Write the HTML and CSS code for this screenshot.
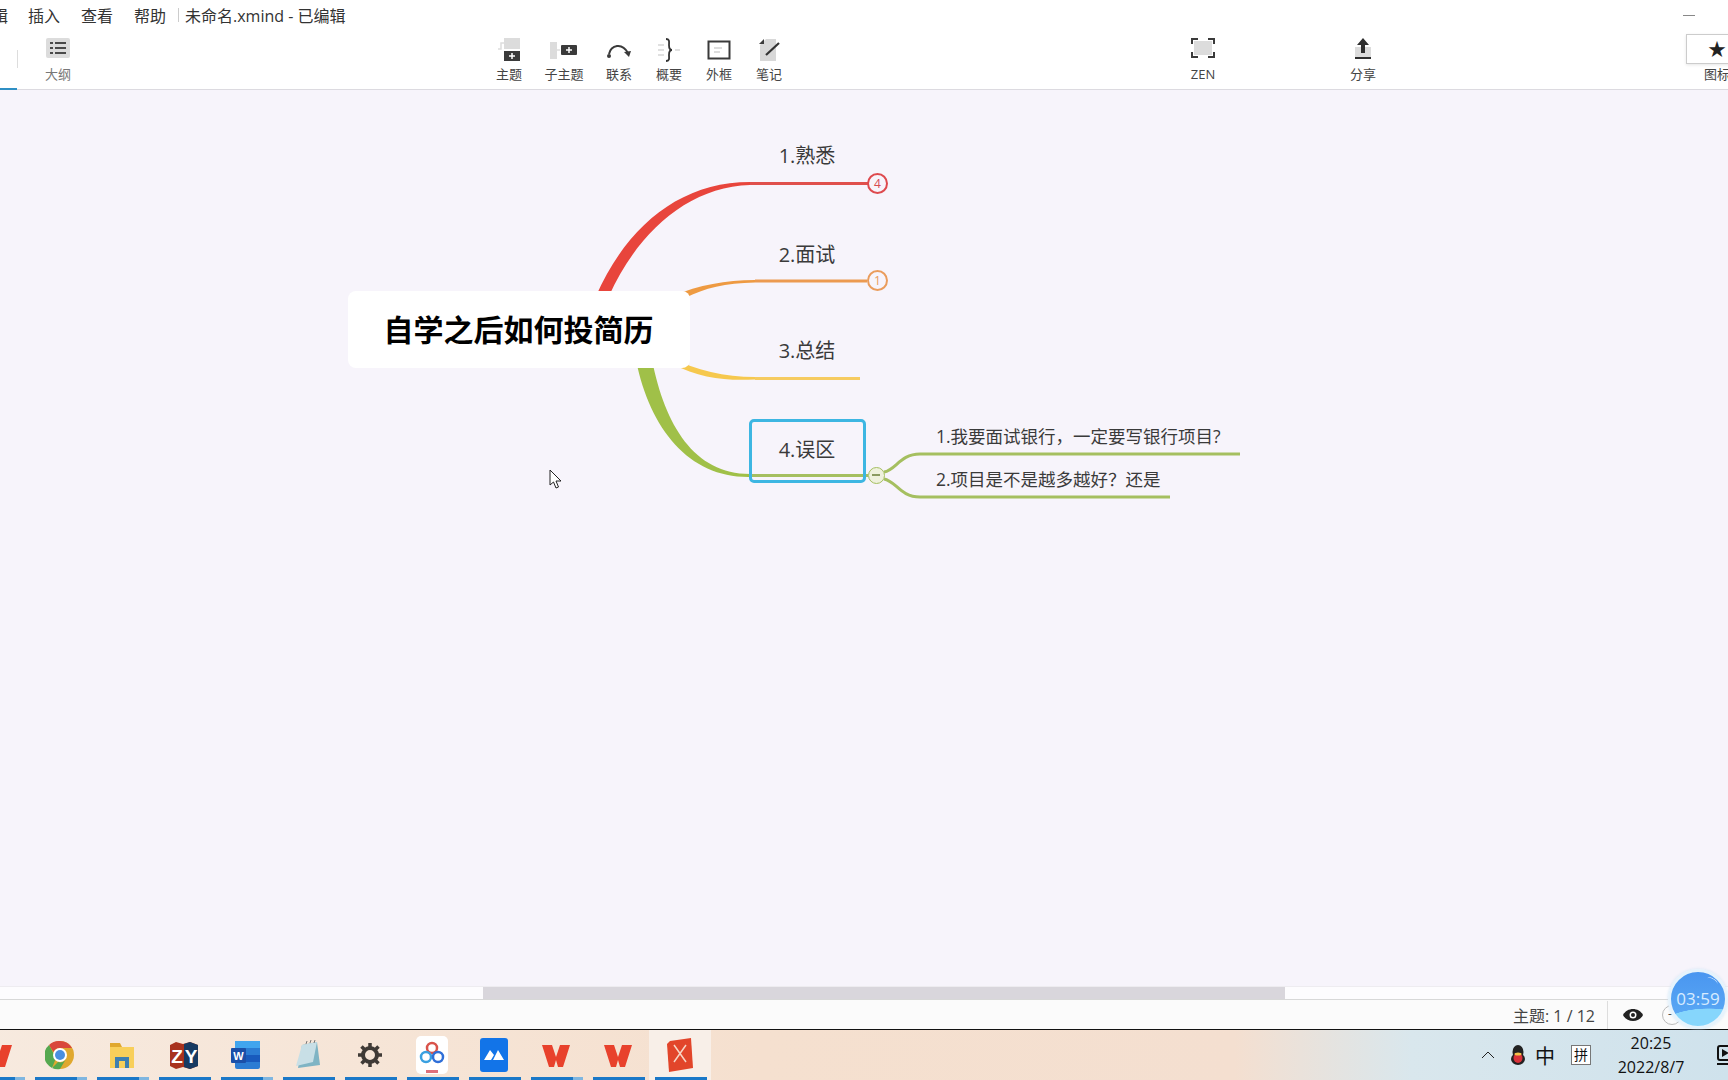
FILE: index.html
```html
<!DOCTYPE html>
<html lang="zh-CN">
<head>
    <meta charset="UTF-8">
    <title>未命名.xmind - 已编辑</title>
    <link rel="stylesheet" href="styles.css">
</head>
<body>

<div class="window">

    <div class="menubar">
        <span class="menu-cut">辑</span>
        <span class="menu-item">插入</span>
        <span class="menu-item">查看</span>
        <span class="menu-item">帮助</span>
        <span class="menu-sep"></span>
        <span class="doc-title">未命名.xmind - 已编辑</span>
        <span class="minimize"></span>
    </div>

    <div class="toolbar">
        <div class="tab-active"></div>
        <div class="tab-sep"></div>

        <div class="tool tool-outline">
            <svg width="24" height="20" viewBox="0 0 24 20">
                <rect width="24" height="20" rx="2" fill="#dcdcdc"/>
                <g fill="#4a4a4a">
                    <rect x="4" y="4" width="3" height="2"/><rect x="9" y="4" width="11" height="2"/>
                    <rect x="4" y="9" width="3" height="2"/><rect x="9" y="9" width="11" height="2"/>
                    <rect x="4" y="14" width="3" height="2"/><rect x="9" y="14" width="11" height="2"/>
                </g>
            </svg>
            <span>大纲</span>
        </div>

        <div class="tool-group">
            <div class="tool">
                <svg width="24" height="24" viewBox="0 0 24 24">
                    <path d="M7 5H4v6H1" fill="none" stroke="#ddd" stroke-width="1.5"/>
                    <rect x="7" y="0" width="16" height="11" fill="#dcdcdc"/>
                    <rect x="7" y="13" width="16" height="10" fill="#3a3a3a"/>
                    <path d="M15 15v6M12 18h6" stroke="#fff" stroke-width="1.5"/>
                </svg>
                <span>主题</span>
            </div>
            <div class="tool tool-wide">
                <svg width="28" height="24" viewBox="0 0 28 24">
                    <rect x="0" y="4" width="7" height="17" fill="#dcdcdc"/>
                    <path d="M7 12h3" stroke="#ddd" stroke-width="1.5"/>
                    <rect x="11" y="7" width="16" height="10" rx="1" fill="#3a3a3a"/>
                    <path d="M19 9v6M16 12h6" stroke="#fff" stroke-width="1.5"/>
                </svg>
                <span>子主题</span>
            </div>
            <div class="tool">
                <svg width="26" height="24" viewBox="0 0 26 24">
                    <path d="M3 16C5 7 16 4 22 15" fill="none" stroke="#3a3a3a" stroke-width="2"/>
                    <circle cx="3" cy="18" r="2" fill="#3a3a3a"/>
                    <path d="M18 14l7-1-2 6z" fill="#3a3a3a"/>
                </svg>
                <span>联系</span>
            </div>
            <div class="tool">
                <svg width="24" height="24" viewBox="0 0 24 24">
                    <path d="M1 7h6M1 12h6M1 17h6M18 12h5" stroke="#d6d6d6" stroke-width="1.5"/>
                    <path d="M9 1c4 0 3 3 3 6s1 5 3 5c-2 0-3 2-3 5s1 6-3 6" fill="none" stroke="#333" stroke-width="1.8"/>
                </svg>
                <span>概要</span>
            </div>
            <div class="tool">
                <svg width="24" height="24" viewBox="0 0 24 24">
                    <rect x="1.5" y="3.5" width="21" height="17" fill="#fff" stroke="#3a3a3a" stroke-width="2"/>
                    <path d="M7 10h8M7 14h6" stroke="#d2d2d2" stroke-width="1.5"/>
                </svg>
                <span>外框</span>
            </div>
            <div class="tool">
                <svg width="24" height="24" viewBox="0 0 24 24">
                    <path d="M3 7l6-6h10v22H3z" fill="#d8d8d8"/>
                    <path d="M2 6l5-5v5z" fill="#3a3a3a"/>
                    <path d="M9 17L22 5" stroke="#333" stroke-width="2.2"/>
                </svg>
                <span>笔记</span>
            </div>
        </div>

        <div class="tool tool-zen">
            <svg width="24" height="20" viewBox="0 0 24 20">
                <rect x="3" y="3" width="18" height="14" fill="#dcdcdc"/>
                <path d="M1 6V1h6M17 1h6v5M23 14v5h-6M7 19H1v-5" fill="none" stroke="#3a3a3a" stroke-width="2"/>
            </svg>
            <span>ZEN</span>
        </div>

        <div class="tool tool-share">
            <svg width="18" height="22" viewBox="0 0 18 22">
                <rect x="1" y="9" width="16" height="11" fill="#dcdcdc"/>
                <path d="M9 0l6 7h-4v8H7V7H3z" fill="#2f2f2f"/>
                <rect x="1" y="19" width="16" height="2" fill="#2f2f2f"/>
            </svg>
            <span>分享</span>
        </div>

        <div class="tool tool-icons">
            <div class="icons-box">★</div>
            <span>图标</span>
        </div>
    </div>

    <div class="canvas">
        <svg class="links" width="1728" height="896" viewBox="0 90 1728 896">
            <path d="M596 296C627 226 680 182 750 182L750 185C688 187 638 232 609 296Z" fill="#e8453c"/>
            <path d="M750 183.5H868" stroke="#e0504c" stroke-width="3"/>
            <path d="M672 296C700 285 725 280 755 280L755 282.5C725 283 705 288 685 298Z" fill="#ee9a42"/>
            <path d="M755 281H867" stroke="#ec9a50" stroke-width="3"/>
            <path d="M672 358C695 370 725 377 755 377L755 379.5C725 381 700 378 672 364Z" fill="#f6c84e"/>
            <path d="M755 378.500H860" stroke="#f6cb60" stroke-width="3"/>
            <path d="M636 360C650 430 690 478 750 477L750 474C694 474 665 425 652 360Z" fill="#a0c048"/>
            <path d="M750 475.500H868" stroke="#a5bf60" stroke-width="3"/>
            <path d="M884 472C896 470 900 454 920 454H1240" fill="none" stroke="#a5bf60" stroke-width="3"/>
            <path d="M884 479C896 481 900 497 920 497H1170" fill="none" stroke="#a5bf60" stroke-width="3"/>
        </svg>

        <div class="central">自学之后如何投简历</div>

        <div class="topic topic-1">1.熟悉</div>
        <div class="badge badge-red">4</div>
        <div class="topic topic-2">2.面试</div>
        <div class="badge badge-orange">1</div>
        <div class="topic topic-3">3.总结</div>
        <div class="topic-box"></div>
        <div class="topic topic-4">4.误区</div>
        <div class="collapse"></div>
        <div class="subtopic subtopic-1">1.我要面试银行，一定要写银行项目?</div>
        <div class="subtopic subtopic-2">2.项目是不是越多越好？还是</div>

        <svg class="cursor" width="14" height="20" viewBox="0 0 14 20">
            <path d="M1 1V16L4.500 13L7 19L9.500 18L7 12H12Z" fill="#fff" stroke="#222" stroke-width="1"/>
        </svg>
    </div>

    <div class="scrollbar"><div class="scroll-thumb"></div></div>

    <div class="statusbar">
        <span class="status-count">主题: 1 / 12</span>
        <span class="status-sep"></span>
        <svg width="20" height="12" viewBox="0 0 20 12" class="status-eye">
            <path d="M0 6C4-2 16-2 20 6C16 14 4 14 0 6Z" fill="#222"/>
            <circle cx="10" cy="6" r="3.500" fill="#fff"/>
            <circle cx="10" cy="6" r="2" fill="#222"/>
        </svg>
        <span class="status-zoom">-</span>
    </div>

    <div class="taskbar">
        <div class="task-item multi">
            <svg width="30" height="30" viewBox="0 0 30 30"><path d="M1 5H11L15 17L19 5H29L22 27H17L15 20L13 27H8Z" fill="#e8412c"/></svg>
        </div>
        <div class="task-item multi">
            <svg width="30" height="30" viewBox="0 0 30 30">
                <circle cx="15" cy="15" r="14" fill="#e0a82e"/>
                <path d="M15 1A14 14 0 0 1 27 8H15A7 7 0 0 0 8.500 12L4 5A14 14 0 0 1 15 1Z" fill="#d9483b"/>
                <path d="M4 5L11 18L7 28A14 14 0 0 1 4 5Z" fill="#55a84f"/>
                <path d="M7 28L13 22A7 7 0 0 0 21 19L15 29A14 14 0 0 1 7 28Z" fill="#55a84f"/>
                <circle cx="15" cy="15" r="7" fill="#fff"/>
                <circle cx="15" cy="15" r="5" fill="#4a8fe0"/>
            </svg>
        </div>
        <div class="task-item multi">
            <svg width="30" height="30" viewBox="0 0 30 30">
                <path d="M3 3H13L15 7H3Z" fill="#e0a82e"/>
                <rect x="3" y="7" width="24" height="21" fill="#f8cf5a"/>
                <path d="M8 28V17H22V28H18V21H12V28Z" fill="#3f7fb0"/>
            </svg>
        </div>
        <div class="task-item">
            <svg width="30" height="30" viewBox="0 0 30 30">
                <path d="M1 5L7 2L14 4L21 2L29 5V26L21 29L14 27L7 29L1 26Z" fill="#a8321e"/>
                <path d="M15 4L21 2L29 5V26L21 29L15 27Z" fill="#173a62"/>
                <text x="8" y="23" class="zy-letter">Z</text>
                <text x="22" y="23" class="zy-letter">Y</text>
            </svg>
        </div>
        <div class="task-item multi">
            <svg width="30" height="30" viewBox="0 0 30 30">
                <rect x="4" y="1" width="25" height="28" rx="2" fill="#2b7cd3"/>
                <rect x="4" y="1" width="25" height="7" fill="#41a5ee"/>
                <rect x="4" y="15" width="25" height="7" fill="#185abd"/>
                <rect x="0" y="8" width="15" height="15" rx="1" fill="#1a4fa8"/>
                <text x="7.500" y="20" class="word-letter">W</text>
            </svg>
        </div>
        <div class="task-item">
            <svg width="30" height="30" viewBox="0 0 30 30">
                <path d="M9 5L24 2L27 25L5 28Z" fill="#7fb4c4"/>
                <path d="M9 5L24 2L20 22L3 26Z" fill="#c8dfe6"/>
                <path d="M13 4l1-3M17 3l1-3M21 3l1-3" stroke="#777" stroke-width="1"/>
            </svg>
        </div>
        <div class="task-item">
            <svg width="24" height="24" viewBox="0 0 24 24">
                <circle cx="12" cy="12" r="7" fill="none" stroke="#3f3a36" stroke-width="4"/>
                <path d="M12 0v5M12 19v5M0 12h5M19 12h5M3.500 3.500l3.500 3.500M17 17l3.500 3.500M20.500 3.500L17 7M7 17l-3.500 3.500" stroke="#3f3a36" stroke-width="3.500"/>
            </svg>
        </div>
        <div class="task-item">
            <svg width="32" height="38" viewBox="0 0 32 38">
                <rect width="32" height="38" rx="5" fill="#fff"/>
                <circle cx="16" cy="12" r="5" fill="none" stroke="#d9534a" stroke-width="2.500"/>
                <circle cx="10" cy="21" r="5" fill="none" stroke="#3aa0e0" stroke-width="2.500"/>
                <circle cx="22" cy="21" r="5" fill="none" stroke="#2f6fd8" stroke-width="2.500"/>
                <rect x="10" y="34" width="12" height="3" fill="#e0707a"/>
            </svg>
        </div>
        <div class="task-item">
            <svg width="28" height="34" viewBox="0 0 28 34">
                <rect width="28" height="34" rx="3" fill="#1274e8"/>
                <path d="M4 22L10 12L14 17L11 22ZM13 22L18 12L24 22Z" fill="#fff"/>
            </svg>
        </div>
        <div class="task-item multi">
            <svg width="30" height="30" viewBox="0 0 30 30"><path d="M1 5H11L15 17L19 5H29L22 27H17L15 20L13 27H8Z" fill="#e8412c"/></svg>
        </div>
        <div class="task-item">
            <svg width="30" height="30" viewBox="0 0 30 30"><path d="M1 5H11L15 17L19 5H29L22 27H17L15 20L13 27H8Z" fill="#e8412c"/></svg>
        </div>
        <div class="task-item task-current">
            <svg width="26" height="34" viewBox="0 0 26 34">
                <path d="M3 3L24 0L26 30L2 34L0 6Z" fill="#e2452a"/>
                <path d="M7 7L19 24M19 7L7 24" stroke="#f7d6c6" stroke-width="1.500"/>
            </svg>
        </div>

        <div class="tray">
            <svg width="14" height="8" viewBox="0 0 14 8"><path d="M1 7L7 1L13 7" fill="none" stroke="#222" stroke-width="1"/></svg>
            <svg width="16" height="20" viewBox="0 0 16 20">
                <ellipse cx="8" cy="7" rx="5.500" ry="7" fill="#222"/>
                <ellipse cx="8" cy="14" rx="7" ry="6" fill="#222"/>
                <ellipse cx="8" cy="13" rx="4.500" ry="5" fill="#d9323a"/>
                <ellipse cx="8" cy="9" rx="3.500" ry="1.500" fill="#f6c24a"/>
            </svg>
            <span class="tray-zh">中</span>
            <span class="tray-ime">拼</span>
            <div class="tray-clock">
                <span>20:25</span>
                <span>2022/8/7</span>
            </div>
            <svg class="tray-rec" width="14" height="22" viewBox="0 0 14 22">
                <rect x="1" y="2" width="20" height="14" rx="2" fill="none" stroke="#111" stroke-width="2"/>
                <path d="M5 5L12 9L5 13Z" fill="#111"/>
                <rect x="0" y="19" width="14" height="2" fill="#111"/>
            </svg>
        </div>
    </div>

    <div class="timer">03:59</div>
</div>

</body>
</html>
```
FILE: styles.css
```css
* {
    box-sizing: border-box;
}

body {
    margin: 0;
    font-family: "Open Sans", "Noto Sans CJK SC", sans-serif;
    color: #333;
    overflow: hidden;
}

.window {
    position: relative;
    display: flex;
    flex-direction: column;
    width: 1728px;
    height: 1080px;
    overflow: hidden;
    background-color: #fff;
}

/* menu row */
.menubar {
    display: flex;
    align-items: center;
    height: 28px;
    flex: none;
    font-size: 16px;
    padding-top: 2px;
}

.menu-cut {
    margin-left: -8px;
    margin-right: 20px;
}

.menu-item {
    width: 32px;
    margin-right: 21px;
    white-space: nowrap;
}

.menu-sep {
    width: 1px;
    height: 14px;
    margin-left: -9px;
    margin-right: 6px;
    background-color: #ccc;
}

.doc-title {
    white-space: nowrap;
}

.minimize {
    width: 12px;
    height: 1px;
    margin-left: auto;
    margin-right: 33px;
    background-color: #888;
}

/* toolbar */
.toolbar {
    position: relative;
    display: flex;
    height: 62px;
    flex: none;
    border-bottom: 1px solid #dcdae0;
}

.tab-active {
    position: absolute;
    left: 0;
    bottom: -1px;
    width: 17px;
    height: 2px;
    background-color: #2f8fc4;
}

.tab-sep {
    position: absolute;
    left: 17px;
    top: 22px;
    width: 1px;
    height: 18px;
    background-color: #ddd;
}

.tool {
    display: flex;
    flex: none;
    flex-direction: column;
    align-items: center;
    justify-content: space-between;
    width: 50px;
    height: 44px;
    margin-top: 10px;
    font-size: 13px;
    line-height: 16px;
    color: #444;
    white-space: nowrap;
}

.tool-wide {
    width: 60px;
}

.tool-outline {
    margin-left: 33px;
    color: #777;
}

.tool-group {
    display: flex;
    flex: none;
    margin-left: 401px;
}

.tool-zen {
    margin-left: 384px;
}

.tool-share {
    margin-left: 110px;
}

.tool-icons {
    margin-left: 298px;
    align-items: flex-start;
    width: 60px;
    margin-top: 6px;
    height: 48px;
}

.icons-box {
    width: 60px;
    height: 30px;
    padding-left: 21px;
    font-size: 18px;
    line-height: 28px;
    color: #222;
    border: 1px solid #ccc;
    background-color: #fff;
    box-shadow: 0 1px 3px rgba(0, 0, 0, 0.1);
}

.tool-icons span {
    margin-left: 18px;
}

/* map area, nodes sit at their own place on the canvas */
.canvas {
    position: relative;
    flex: 1;
    background-color: #f7f4fb;
}

.links {
    position: absolute;
    left: 0;
    top: 0;
}

.central {
    position: absolute;
    left: 348px;
    top: 201px;
    width: 342px;
    height: 77px;
    padding-right: 1px;
    border-radius: 8px;
    background-color: #fff;
    font-family: "Noto Sans CJK SC", sans-serif;
    font-size: 30px;
    font-weight: 700;
    line-height: 75px;
    text-align: center;
    color: #000;
}

.topic {
    position: absolute;
    left: 749px;
    width: 116px;
    font-size: 20px;
    line-height: 28px;
    text-align: center;
    color: #3a3a3a;
}

.topic-1 {
    top: 52px;
}

.topic-2 {
    top: 151px;
}

.topic-3 {
    top: 247px;
}

.topic-4 {
    top: 346px;
}

.topic-box {
    position: absolute;
    left: 749px;
    top: 329px;
    width: 117px;
    height: 64px;
    border: 3px solid #3db6e2;
    border-radius: 5px;
}

.badge {
    position: absolute;
    left: 867px;
    width: 21px;
    height: 21px;
    border: 2px solid;
    border-radius: 50%;
    background-color: #f7f4fb;
    font-size: 12px;
    line-height: 17px;
    text-align: center;
}

.badge-red {
    top: 83px;
    border-color: #de4a4e;
    color: #d84a50;
}

.badge-orange {
    top: 180px;
    border-color: #ea9c5c;
    color: #ea9c5c;
}

.collapse {
    position: absolute;
    left: 868px;
    top: 377px;
    width: 17px;
    height: 17px;
    border: 1.500px solid #a5bf60;
    border-radius: 50%;
    background-color: #eef1dc;
}

.collapse::after {
    content: "";
    position: absolute;
    left: 3px;
    top: 6px;
    width: 8px;
    height: 1.500px;
    background-color: #8a9a60;
}

.subtopic {
    position: absolute;
    left: 936px;
    font-size: 17.500px;
    line-height: 26px;
    white-space: nowrap;
    color: #3a3a3a;
}

.subtopic-1 {
    top: 333px;
}

.subtopic-2 {
    top: 376px;
}

.cursor {
    position: absolute;
    left: 549px;
    top: 379px;
}

/* bottom bars */
.scrollbar {
    height: 13px;
    flex: none;
    padding-left: 483px;
    background-color: #fdfcfe;
    border-top: 1px solid #eeecf0;
}

.scroll-thumb {
    width: 802px;
    height: 12px;
    background-color: #d9d6dc;
}

.statusbar {
    display: flex;
    align-items: center;
    height: 31px;
    flex: none;
    padding-left: 1513px;
    border-top: 1px solid #d8d8d8;
    border-bottom: 1px solid #111;
    background-color: #fbfbfb;
    font-size: 16px;
    color: #444;
    white-space: nowrap;
}

.status-count {
    width: 94px;
}

.status-sep {
    width: 1px;
    height: 28px;
    background-color: #ddd;
}

.status-eye {
    margin-left: 15px;
}

.status-zoom {
    width: 20px;
    height: 20px;
    margin-left: 19px;
    border: 1px solid #bbb;
    border-radius: 50%;
    font-size: 12px;
    line-height: 16px;
    padding-left: 5px;
}

.taskbar {
    display: flex;
    height: 50px;
    flex: none;
    margin-left: -33px;
    width: 1761px;
    background: linear-gradient(to right, #f7eadf 0%, #f5e0cf 45%, #f4dfd0 72%, #d9e7ed 82%, #cfe2ec 100%);
}

.task-item {
    position: relative;
    display: flex;
    align-items: center;
    justify-content: center;
    width: 62px;
    height: 50px;
}

.task-item::after {
    content: "";
    position: absolute;
    left: 6px;
    bottom: 0;
    width: 52px;
    height: 3px;
    background-color: #1a78c8;
}

.multi::before {
    content: "";
    position: absolute;
    left: 48px;
    bottom: 0;
    width: 10px;
    height: 3px;
    z-index: 1;
    background-color: #7fb6e0;
}

.task-current {
    background-color: #f8efe8;
}

.zy-letter {
    font-family: "Liberation Sans", sans-serif;
    font-size: 19px;
    font-weight: 700;
    text-anchor: middle;
    fill: #fff;
}

.word-letter {
    font-family: "Liberation Sans", sans-serif;
    font-size: 11px;
    font-weight: 700;
    text-anchor: middle;
    fill: #fff;
}

.tray {
    display: flex;
    align-items: center;
    margin-left: auto;
    color: #111;
}

.tray svg {
    flex: none;
}

.tray-zh {
    margin-left: 9px;
    font-size: 20px;
}

.tray-ime {
    width: 20px;
    height: 20px;
    margin-left: 16px;
    border: 1px solid #777;
    background-color: #fff;
    font-size: 14px;
    line-height: 18px;
    text-align: center;
}

.tray-clock {
    display: flex;
    flex-direction: column;
    align-items: center;
    width: 72px;
    margin-left: 24px;
    font-size: 16px;
    line-height: 24px;
    white-space: nowrap;
}

.tray-rec {
    margin-left: 30px;
    margin-right: -3px;
}

.tray > svg:first-child {
    margin-right: 15px;
}

.timer {
    position: absolute;
    left: 1668px;
    top: 969px;
    width: 60px;
    height: 60px;
    border: 3px solid #e6f3fc;
    border-radius: 50%;
    background: radial-gradient(ellipse 52px 22px at 70% 108%, #86d6fc 98%, transparent 100%), linear-gradient(to bottom, #4a96f0 0%, #5cabf5 100%);
    font-size: 17px;
    line-height: 54px;
    text-align: center;
    color: #d8ecff;
    box-shadow: 0 0 3px rgba(200, 225, 245, 0.8);
}

.timer::before {
    content: "";
    position: absolute;
    right: 7px;
    top: 6px;
    width: 12px;
    height: 6px;
    border-top: 1px solid rgba(255, 255, 255, 0.7);
    border-radius: 50%;
    transform: rotate(30deg);
}
```
